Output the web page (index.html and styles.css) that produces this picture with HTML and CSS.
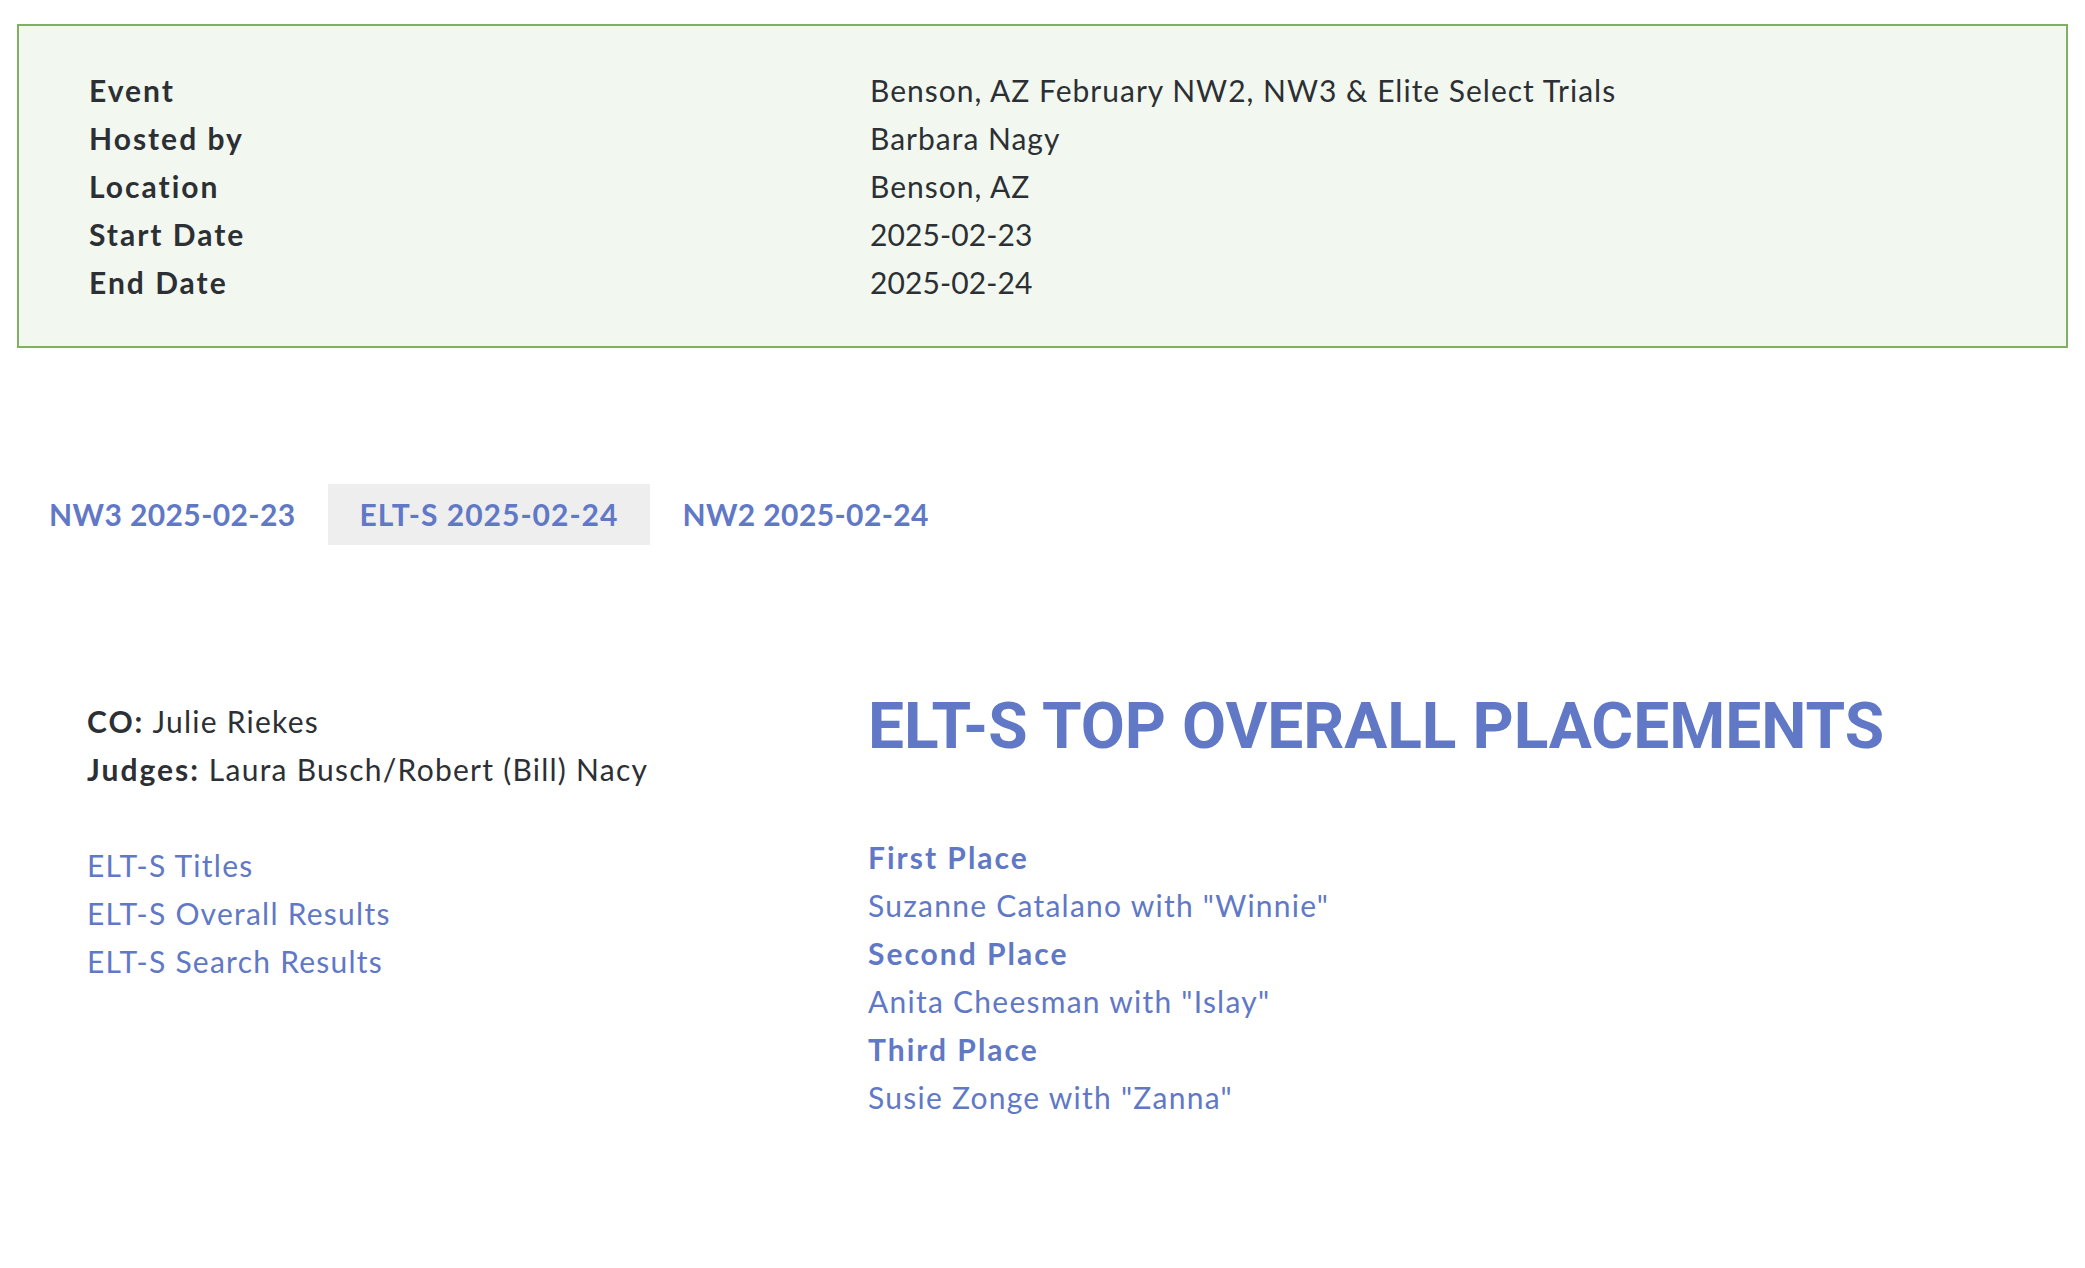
FILE: index.html
```html
<!DOCTYPE html>
<html lang="en">
<head>
<meta charset="utf-8">
<title>Benson, AZ February NW2, NW3 &amp; Elite Select Trials</title>
<link rel="stylesheet" href="styles.css">
</head>
<body>
<div class="page">
  <section class="event-box">
    <div class="event-label">Event</div><div class="event-value">Benson, AZ February NW2, NW3 &amp; Elite Select Trials</div>
    <div class="event-label">Hosted by</div><div class="event-value">Barbara Nagy</div>
    <div class="event-label">Location</div><div class="event-value">Benson, AZ</div>
    <div class="event-label">Start Date</div><div class="event-value event-date">2025-02-23</div>
    <div class="event-label">End Date</div><div class="event-value event-date">2025-02-24</div>
  </section>

  <nav class="tabs">
    <a class="tab" href="#">NW3 2025-02-23</a>
    <a class="tab tab-active" href="#">ELT-S 2025-02-24</a>
    <a class="tab" href="#">NW2 2025-02-24</a>
  </nav>

  <section class="results">
    <div class="info-col">
      <div class="info-line"><strong>CO:</strong> Julie Riekes</div>
      <div class="info-line"><strong>Judges:</strong> Laura Busch/Robert (Bill) Nacy</div>
      <ul class="link-list">
        <li><a href="#">ELT-S Titles</a></li>
        <li><a href="#">ELT-S Overall Results</a></li>
        <li><a href="#">ELT-S Search Results</a></li>
      </ul>
    </div>
    <div class="placements-col">
      <h1 class="placements-title">ELT-S TOP OVERALL PLACEMENTS</h1>
      <div class="placements">
        <div class="place-label">First Place</div>
        <div class="place-name">Suzanne Catalano with "Winnie"</div>
        <div class="place-label">Second Place</div>
        <div class="place-name">Anita Cheesman with "Islay"</div>
        <div class="place-label">Third Place</div>
        <div class="place-name">Susie Zonge with "Zanna"</div>
      </div>
    </div>
  </section>
</div>
</body>
</html>
```

FILE: styles.css
```css
html, body {
  margin: 0;
  padding: 0;
  background: #ffffff;
}

body {
  font-family: "Lato", "Open Sans", "Liberation Sans", sans-serif;
  font-size: 30px;
  line-height: 48px;
  letter-spacing: 1.25px;
  color: #2c3034;
}

a {
  color: #6078c5;
  text-decoration: none;
}

strong,
.event-label,
.place-label {
  font-weight: 700;
  letter-spacing: 2px;
}

.page {
  padding: 24px 17px 60px;
}

.event-box {
  display: grid;
  grid-template-columns: 781px 1fr;
  padding: 40px 70px;
  border: 2px solid #80b060;
  background: #f2f8ef;
}

.event-value {
  letter-spacing: 1px;
}

.event-date {
  letter-spacing: 0.1px;
}

.tabs {
  display: flex;
  margin-top: 136px;
  padding-left: 0;
}

.tab {
  display: block;
  height: 61px;
  line-height: 61px;
  padding: 0 32px;
  font-weight: 700;
  letter-spacing: 0.4px;
  color: #6078c5;
}

.tab-active {
  background: #eeeeee;
  letter-spacing: 1px;
}

.results {
  display: grid;
  grid-template-columns: 851px 1fr;
  margin-top: 143px;
}

.info-col {
  padding-left: 70px;
  padding-top: 9px;
}

.link-list {
  list-style: none;
  margin: 48px 0 0;
  padding: 0;
}

.placements-title {
  margin: 0;
  font-family: "Roboto", "Liberation Sans", sans-serif;
  font-size: 64px;
  line-height: 77px;
  font-weight: 700;
  letter-spacing: 0;
  color: #6078c5;
}

.placements {
  margin-top: 68px;
  color: #6078c5;
}
```
